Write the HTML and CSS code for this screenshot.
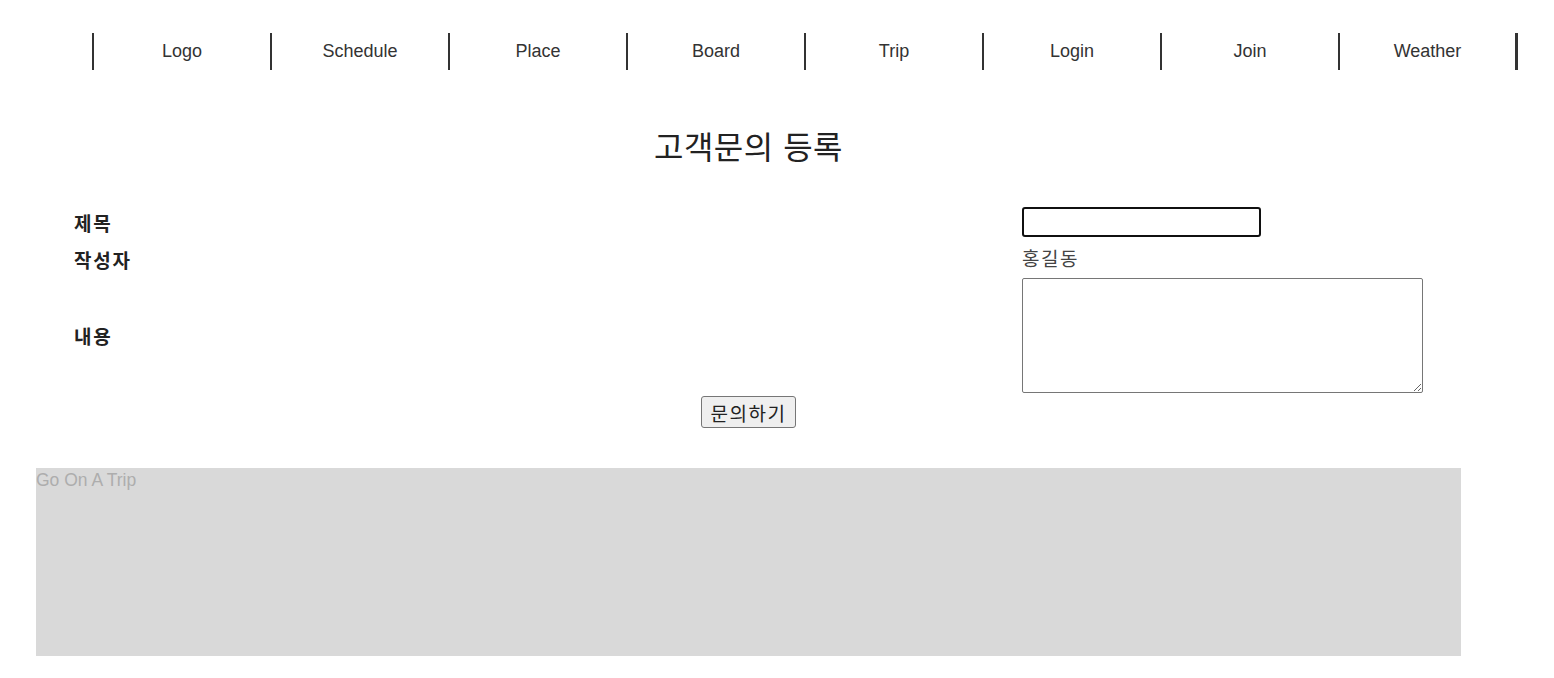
FILE: index.html
```html
<!DOCTYPE html>
<html lang="ko">
<head>
<meta charset="utf-8">
<title>고객문의 등록</title>
<link rel="stylesheet" href="styles.css">
</head>
<body>
<div class="wrap">
  <nav class="nav">
    <ul class="menu">
      <li>Logo</li>
      <li>Schedule</li>
      <li>Place</li>
      <li>Board</li>
      <li>Trip</li>
      <li>Login</li>
      <li>Join</li>
      <li class="last">Weather</li>
    </ul>
  </nav>
  <h1 class="title">고객문의 등록</h1>
  <form class="form">
    <div class="row row-title">
      <label class="lbl">제목</label>
      <input class="inp" type="text">
    </div>
    <div class="row row-writer">
      <span class="lbl">작성자</span>
      <span class="val">홍길동</span>
    </div>
    <div class="row row-content">
      <label class="lbl">내용</label>
      <textarea class="txt"></textarea>
    </div>
    <div class="actions">
      <button class="btn" type="button">문의하기</button>
    </div>
  </form>
  <footer class="foot">Go On A Trip</footer>
</div>
</body>
</html>
```

FILE: styles.css
```css
html, body {
  margin: 0;
  padding: 0;
  background: #fff;
}
body {
  margin: 8px;
  font-family: "Liberation Sans", "Noto Sans CJK KR", sans-serif;
  color: #333;
}
.wrap {
  margin-left: 28px;
  width: 1425px;
}
.nav {
  padding-top: 25px;
}
.menu {
  list-style: none;
  margin: 0;
  padding: 0 0 0 56px;
  display: flex;
  width: max-content;
}
.menu li {
  box-sizing: border-box;
  width: 178px;
  height: 37px;
  border-left: 2px solid #333;
  display: flex;
  align-items: center;
  justify-content: center;
  font-size: 18px;
  color: #333;
}
.menu li.last {
  border-right: 3px solid #333;
  width: 180px;
}
.title {
  margin: 58px 0 0;
  text-align: center;
  font-size: 32px;
  font-weight: normal;
  letter-spacing: 0.5px;
  line-height: 40px;
  height: 40px;
  color: #222;
}
.form {
  margin-top: 39px;
  padding-left: 38px;
}
.row {
  display: flex;
  align-items: center;
}
.lbl {
  width: 948px;
  flex: none;
  font-size: 19px;
  letter-spacing: 1.8px;
  font-weight: bold;
  color: #222;
}
.row-title {
  height: 30px;
}
.inp {
  box-sizing: border-box;
  width: 239px;
  height: 30px;
  margin: 0;
  border: 2px solid #101010;
  border-radius: 3px;
  padding: 0 4px;
  font-size: 16px;
  outline: none;
}
.row-writer {
  padding-top: 10px;
  height: 25px;
}
.val {
  font-size: 19px;
  letter-spacing: 1.5px;
  line-height: 25px;
  color: #444;
}
.row-content {
  margin-top: 6px;
}
.txt {
  box-sizing: border-box;
  width: 401px;
  height: 115px;
  margin: 0;
  border: 1px solid #767676;
  border-radius: 2px;
  padding: 2px;
  font-size: 14px;
}
.actions {
  margin-top: 3px;
  margin-left: -38px;
  display: flex;
  justify-content: center;
}
.btn {
  box-sizing: border-box;
  width: 95px;
  height: 32px;
  margin: 0;
  padding: 0;
  font-family: "Liberation Sans", "Noto Sans CJK KR", sans-serif;
  font-size: 19px;
  letter-spacing: 1.5px;
  color: #222;
  background: #efefef;
  border: 1px solid #767676;
  border-radius: 3px;
}
.foot {
  margin-top: 40px;
  height: 188px;
  background: #d9d9d9;
  color: #adadad;
  font-size: 17.5px;
  line-height: 24px;
}
```
